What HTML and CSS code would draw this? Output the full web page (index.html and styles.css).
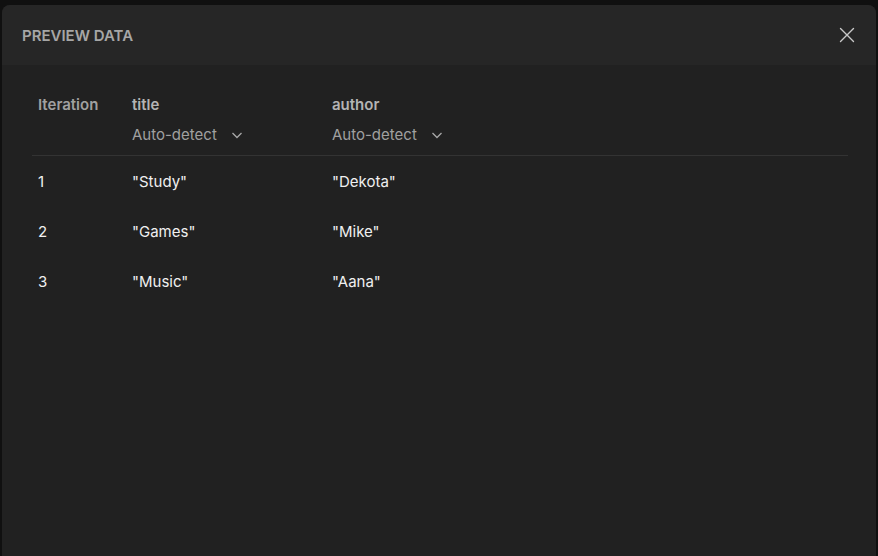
FILE: index.html
```html
<!DOCTYPE html>
<html>
<head>
<meta charset="utf-8">
<link rel="stylesheet" href="styles.css">
</head>
<body>
<div class="modal">
  <div class="modal-header">
    <h2 class="modal-title">PREVIEW DATA</h2>
    <button class="close-btn" aria-label="Close">
      <svg width="16" height="16" viewBox="0 0 16 16"><path d="M1.5 1.5L14.5 14.5M14.5 1.5L1.5 14.5" stroke="#c8c8c8" stroke-width="1.4" fill="none" stroke-linecap="round"/></svg>
    </button>
  </div>
  <div class="modal-body">
    <table class="data-table">
      <thead>
        <tr>
          <th class="col-iter"><div class="th-label iter-label">Iteration</div></th>
          <th class="col-title">
            <div class="th-label">title</div>
            <div class="type-select">Auto-detect
              <svg width="12" height="12" viewBox="0 0 12 12"><path d="M1.5 4L6 8.5L10.5 4" stroke="#a8a8a8" stroke-width="1.3" fill="none"/></svg>
            </div>
          </th>
          <th class="col-author">
            <div class="th-label">author</div>
            <div class="type-select">Auto-detect
              <svg width="12" height="12" viewBox="0 0 12 12"><path d="M1.5 4L6 8.5L10.5 4" stroke="#a8a8a8" stroke-width="1.3" fill="none"/></svg>
            </div>
          </th>
        </tr>
      </thead>
      <tbody>
        <tr><td>1</td><td>"Study"</td><td>"Dekota"</td></tr>
        <tr><td>2</td><td>"Games"</td><td>"Mike"</td></tr>
        <tr><td>3</td><td>"Music"</td><td>"Aana"</td></tr>
      </tbody>
    </table>
  </div>
</div>
</body>
</html>
```
FILE: styles.css
```css
* { box-sizing: border-box; }
html, body {
  margin: 0;
  padding: 0;
  height: 100%;
  background: #101010;
  font-family: Inter, "Noto Sans", sans-serif;
  overflow: hidden;
}
body {
  padding: 5px 2px 0 2px;
}
.modal {
  height: 100%;
  background: #212121;
  border-radius: 8px 8px 0 0;
  overflow: hidden;
  display: flex;
  flex-direction: column;
}
.modal-header {
  height: 60px;
  background: #262626;
  display: flex;
  align-items: center;
  justify-content: space-between;
  padding: 0 21px 0 20px;
  flex-shrink: 0;
}
.modal-title {
  margin: 0;
  font-size: 15px;
  font-weight: 600;
  color: #a6a6a6;
  letter-spacing: 0;
}
.close-btn {
  background: none;
  border: none;
  padding: 0;
  width: 16px;
  height: 16px;
  display: flex;
  cursor: pointer;
}
.modal-body {
  padding: 20px 28px 0 30px;
}
.data-table {
  width: 100%;
  border-collapse: collapse;
  font-size: 15px;
}
.data-table th {
  text-align: left;
  vertical-align: top;
  padding: 11px 6px 11px 6px;
  font-weight: 600;
  border-bottom: 1px solid #333333;
}
.col-iter { width: 94px; }
.col-title { width: 200px; }
.th-label {
  color: #b4b4b4;
  line-height: 18px;
}
.iter-label { color: #a0a0a0; }
.type-select {
  margin-top: 12px;
  font-weight: 400;
  color: #a0a0a0;
  line-height: 18px;
  display: flex;
  align-items: center;
  gap: 14px;
}
.data-table td {
  padding: 2px 6px 0 6px;
  height: 50px;
  line-height: 18px;
  color: #f0f0f0;
  font-weight: 400;
  vertical-align: middle;
}
```
